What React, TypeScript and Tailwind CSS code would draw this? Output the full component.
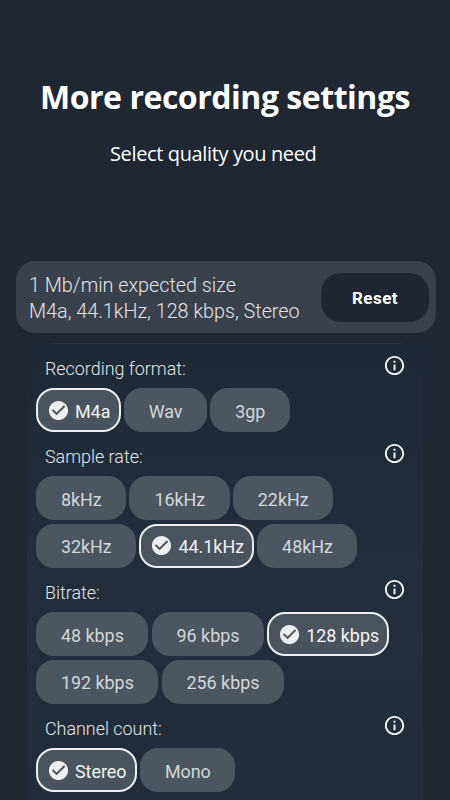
import React from "react";
import { MdCheckCircle, MdInfoOutline } from "react-icons/md";

type ChipProps = { label: string; width: string; selected?: boolean };

function Chip({ label, width, selected }: ChipProps) {
  return selected ? (
    <button
      className={`${width} flex h-[44px] shrink-0 items-center rounded-[18px] border-2 border-[#eceef0] bg-[#4a545f] pl-[8.5px] text-[17.9px] leading-[22px] whitespace-nowrap text-[#f3f4f5]`}
    >
      <MdCheckCircle className="mr-[5.5px] size-[23px] shrink-0 text-[#eceef0]" />
      <span className="pt-[3px]">{label}</span>
    </button>
  ) : (
    <button
      className={`${width} flex h-[44px] shrink-0 items-center justify-center rounded-[18px] bg-[#4c5661] text-[17.9px] leading-[22px] whitespace-nowrap text-[#d3d6d9]`}
    >
      <span className="pt-[3px] pl-[0.5px]">{label}</span>
    </button>
  );
}

function Section({ title, rows, height }: { title: string; rows: ChipProps[][]; height: string }) {
  return (
    <section className={`${height} shrink-0 pl-[9px]`}>
      <div className="flex h-[44px] items-center justify-between pr-[17px] pl-[9px]">
        <h2 className="pt-[5px] text-[17.9px] leading-[22px] font-light text-[#e5e8ea]">{title}</h2>
        <MdInfoOutline className="mb-px size-[23px] text-[#f5f6f7]" />
      </div>
      <div className="flex flex-col gap-[3.5px]">
        {rows.map((row, i) => (
          <div key={i} className="flex gap-[3.3px]">
            {row.map((chip) => (
              <Chip key={chip.label} {...chip} />
            ))}
          </div>
        ))}
      </div>
    </section>
  );
}

export default function App() {
  return (
    <main className="flex h-[800px] w-[450px] flex-col overflow-hidden bg-[#1e2732] font-['Roboto',sans-serif]">
      <header className="h-[261px] shrink-0 pt-[75px] font-['Open_Sans',sans-serif] text-white">
        <h1 className="pl-[40px] text-[32px] leading-[44px] font-bold tracking-[-0.47px] whitespace-nowrap">More recording settings</h1>
        <p className="mt-[21px] pl-[110px] text-[20px] leading-[28px] tracking-[-0.37px] whitespace-nowrap">Select quality you need</p>
      </header>

      <div className="mx-auto flex h-[72px] w-[420px] shrink-0 translate-x-[1px] items-center justify-between rounded-[19px] bg-[#39414c] pr-[7px] pl-[13px]">
        <div className="pt-[4px] text-[19.75px] leading-[26px] font-light whitespace-nowrap text-[#e3e5e8]">
          <p>1 Mb/min expected size</p>
          <p>M4a, 44.1kHz, 128 kbps, Stereo</p>
        </div>
        <button className="h-[49px] w-[108px] rounded-[20px] bg-[#1d2631] pt-[3px] text-[17px] font-bold tracking-[0.5px] text-white">
          Reset
        </button>
      </div>

      <div className="mt-[10px] ml-[51px] h-px w-[351px] shrink-0 bg-[#27323e]" />

      <div className="ml-[27px] flex h-[456px] w-[396px] shrink-0 flex-col bg-linear-to-b from-[#1e2935] via-[#222e3c] to-[#212d3a]">
        <Section
          title="Recording format:"
          height="h-[88px]"
          rows={[
            [
              { label: "M4a", width: "w-[84.7px]", selected: true },
              { label: "Wav", width: "w-[82.7px]" },
              { label: "3gp", width: "w-[80px]" },
            ],
          ]}
        />
        <Section
          title="Sample rate:"
          height="h-[136px]"
          rows={[
            [
              { label: "8kHz", width: "w-[90.2px]" },
              { label: "16kHz", width: "w-[100.2px]" },
              { label: "22kHz", width: "w-[100px]" },
            ],
            [
              { label: "32kHz", width: "w-[100.2px]" },
              { label: "44.1kHz", width: "w-[114.5px]", selected: true },
              { label: "48kHz", width: "w-[100px]" },
            ],
          ]}
        />
        <Section
          title="Bitrate:"
          height="h-[136px]"
          rows={[
            [
              { label: "48 kbps", width: "w-[112.3px]" },
              { label: "96 kbps", width: "w-[112.3px]" },
              { label: "128 kbps", width: "w-[122.3px]", selected: true },
            ],
            [
              { label: "192 kbps", width: "w-[122.3px]" },
              { label: "256 kbps", width: "w-[122.3px]" },
            ],
          ]}
        />
        <Section
          title="Channel count:"
          height="h-[96px]"
          rows={[
            [
              { label: "Stereo", width: "w-[100.8px]", selected: true },
              { label: "Mono", width: "w-[95px]" },
            ],
          ]}
        />
      </div>
    </main>
  );
}
